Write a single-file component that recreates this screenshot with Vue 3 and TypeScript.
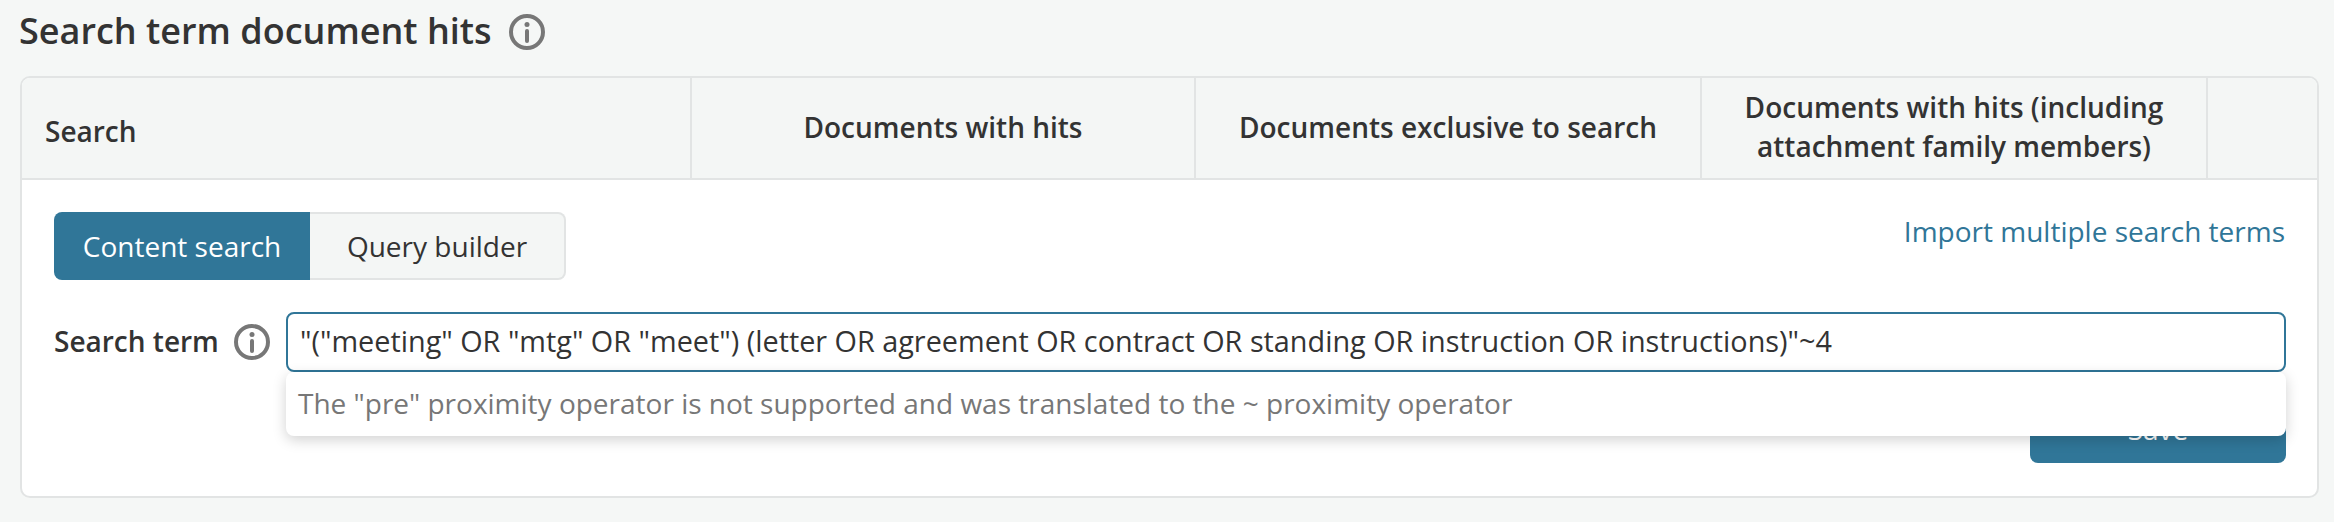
<script setup lang="ts">
interface Column {
  label: string
  width: number
  left?: boolean
}

const columns: Column[] = [
  { label: 'Search', width: 670, left: true },
  { label: 'Documents with hits', width: 504 },
  { label: 'Documents exclusive to search', width: 506 },
  { label: 'Documents with hits (including attachment family members)', width: 506 }
]

const query =
  '"("meeting" OR "mtg" OR "meet") (letter OR agreement OR contract OR standing OR instruction OR instructions)"~4'
const warning = 'The "pre" proximity operator is not supported and was translated to the ~ proximity operator'
</script>

<template>
  <div class="page">
    <div class="title-row">
      <h2 class="title">Search term document hits</h2>
      <svg class="info" viewBox="0 0 36 36" width="36" height="36">
        <circle cx="18" cy="18" r="16" fill="none" stroke="#777" stroke-width="4" />
        <circle cx="18" cy="10.5" r="2.5" fill="#777" />
        <rect x="16" y="15" width="4" height="14" rx="2" fill="#777" />
      </svg>
    </div>

    <div class="card">
      <div class="head">
        <div
          v-for="col in columns"
          :key="col.label"
          class="head-cell"
          :class="{ left: col.left }"
          :style="{ width: col.width + 'px' }"
        >
          <span>{{ col.label }}</span>
        </div>
        <div class="head-cell last"></div>
      </div>

      <div class="body">
        <div class="top-row">
          <div class="toggle">
            <button class="tab active">Content search</button>
            <button class="tab">Query builder</button>
          </div>
          <a class="import">Import multiple search terms</a>
        </div>

        <div class="term-row">
          <label class="term-label">Search term</label>
          <svg class="info" viewBox="0 0 36 36" width="36" height="36">
            <circle cx="18" cy="18" r="16" fill="none" stroke="#777" stroke-width="4" />
            <circle cx="18" cy="10.5" r="2.5" fill="#777" />
            <rect x="16" y="15" width="4" height="14" rx="2" fill="#777" />
          </svg>
          <div class="field">
            <div class="input">{{ query }}</div>
            <div class="popup">{{ warning }}</div>
          </div>
        </div>

        <div class="actions">
          <button class="save">Save</button>
        </div>
      </div>
    </div>
  </div>
</template>

<style>
html,
body {
  margin: 0;
  background: #f5f7f6;
}
</style>

<style scoped>
.page {
  width: 2334px;
  height: 522px;
  overflow: hidden;
  box-sizing: border-box;
  padding: 14px 15px 0 20px;
  font-family: "Open Sans", "Liberation Sans", sans-serif;
  color: #333;
}

.title-row {
  display: flex;
  align-items: center;
  height: 36px;
  margin-bottom: 26px;
}

.title {
  margin: 0 17px 2px -1px;
  font-size: 36px;
  font-weight: 600;
  line-height: 36px;
}

.info {
  flex: none;
}

.card {
  border: 2px solid #e2e4e4;
  border-radius: 10px;
  background: #fff;
  height: 422px;
  box-sizing: border-box;
  overflow: hidden;
}

.head {
  display: flex;
  height: 102px;
  box-sizing: border-box;
  background: #f4f6f5;
  border-bottom: 2px solid #e2e4e4;
}

.head-cell {
  flex: none;
  box-sizing: border-box;
  display: flex;
  align-items: center;
  justify-content: center;
  text-align: center;
  padding: 0 30px 2px;
  border-right: 2px solid #e2e4e4;
  font-size: 28px;
  font-weight: 600;
  line-height: 39px;
}

.head-cell.left {
  justify-content: flex-start;
  padding: 6px 0 0 23px;
}

.head-cell.last {
  flex: 1;
  border-right: 0;
}

.body {
  padding: 32px 31px 0 32px;
}

.top-row {
  display: flex;
  justify-content: space-between;
  height: 68px;
}

.toggle {
  display: flex;
}

.tab {
  height: 68px;
  width: 256px;
  box-sizing: border-box;
  border: 2px solid #e2e4e4;
  border-left: 0;
  border-radius: 0 8px 8px 0;
  background: #f4f6f5;
  color: #333;
  font: 400 28px "Open Sans", sans-serif;
  padding: 0;
}

.tab.active {
  width: 256px;
  border: 0;
  border-radius: 8px 0 0 8px;
  background: #307698;
  color: #fff;
}

.import {
  color: #307698;
  font-size: 28px;
  line-height: 36px;
  margin: 1px 1px 0 0;
}

.term-row {
  display: flex;
  align-items: center;
  margin-top: 32px;
}

.term-label {
  font-size: 28px;
  font-weight: 600;
  width: 180px;
  padding-bottom: 2px;
}

.field {
  position: relative;
  flex: 1;
  margin-left: 16px;
}

.input {
  height: 60px;
  box-sizing: border-box;
  border: 2px solid #307698;
  border-radius: 8px;
  padding: 0 12px;
  font-size: 28.8px;
  line-height: 54px;
  white-space: nowrap;
}

.popup {
  position: absolute;
  top: 60px;
  left: 0;
  right: 0;
  height: 64px;
  box-sizing: border-box;
  padding: 0 12px;
  background: #fff;
  border-radius: 8px;
  box-shadow: 0 4px 14px rgba(0, 0, 0, 0.18);
  color: #777;
  font-size: 28px;
  line-height: 62px;
  white-space: nowrap;
  z-index: 2;
}

.actions {
  display: flex;
  justify-content: flex-end;
  margin-top: 23px;
}

.save {
  width: 256px;
  height: 68px;
  border: 0;
  border-radius: 8px;
  background: #307698;
  color: #fff;
  font: 400 28px "Open Sans", sans-serif;
}
</style>
